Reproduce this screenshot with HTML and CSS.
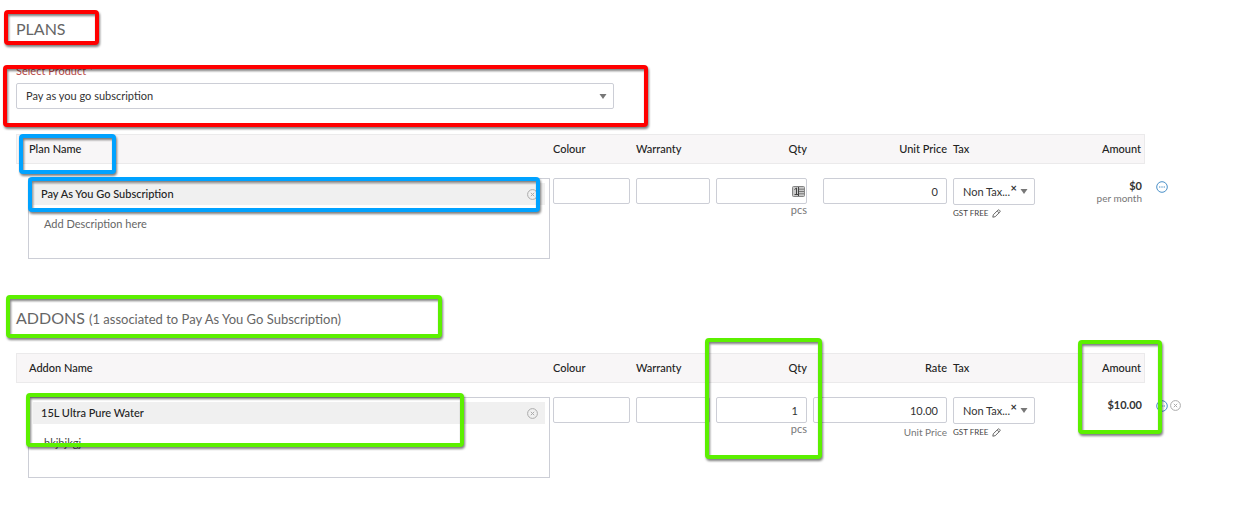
FILE: index.html
```html
<!DOCTYPE html>
<html lang="en">
<head>
    <meta charset="UTF-8">
    <title>Subscription</title>
    <link rel="stylesheet" href="styles.css">
</head>
<body>
<svg class="sprite" aria-hidden="true">
    <symbol id="close" viewBox="0 0 11 11">
        <circle cx="5.5" cy="5.5" r="4.9"/>
        <path d="M3.8 3.8l3.4 3.4M7.2 3.8L3.8 7.2"/>
    </symbol>
    <symbol id="more" viewBox="0 0 12 12">
        <circle cx="6" cy="6" r="5.3"/>
        <path d="M3 6h1.4M5.3 6h1.4M7.6 6H9"/>
    </symbol>
    <symbol id="pencil" viewBox="0 0 9 9">
        <path d="M.8 8.2l.5-2.4L6 1.1q.6-.6 1.3 0l.6.6q.6.6 0 1.3L3.2 7.7zM5.2 2l1.9 1.9"/>
    </symbol>
    <symbol id="arrow" viewBox="0 0 8 5">
        <path d="M.5 0h7L4 5z"/>
    </symbol>
</svg>
<div class="main">
    <h2>PLANS</h2>
    <label class="required" for="product">Select Product *</label>
    <div class="select product">
        <select id="product">
            <option>Pay as you go subscription</option>
        </select>
        <svg class="arrow"><use href="#arrow"/></svg>
    </div>

    <table>
        <thead>
        <tr>
            <th class="name">Plan Name</th>
            <th class="colour">Colour</th>
            <th class="warranty">Warranty</th>
            <th class="qty">Qty</th>
            <th class="price">Unit Price</th>
            <th class="tax">Tax</th>
            <th class="amount">Amount</th>
            <td class="actions"></td>
        </tr>
        </thead>
        <tbody>
        <tr>
            <td class="name">
                <div class="item">
                    <div class="bar">
                        <span>Pay As You Go Subscription</span>
                        <button class="icon grey" aria-label="Remove plan"><svg><use href="#close"/></svg></button>
                    </div>
                    <textarea aria-label="Plan description" placeholder="Add Description here"></textarea>
                </div>
            </td>
            <td><input type="text" aria-label="Colour"></td>
            <td><input type="text" aria-label="Warranty"></td>
            <td class="qty">
                <input type="text" aria-label="Qty" value="1">
                <svg class="card" viewBox="0 0 13 11">
                    <rect x=".5" y=".5" width="12" height="10" rx="1" fill="#c9c9c9" stroke="#858585"/>
                    <path d="M7 3.2h5M7 5.5h5M7 7.8h5" stroke="#777"/>
                    <path d="M2.5 3.5L4.5 2v6.5M2.5 8.5h4M6.5 1v9" stroke="#444" fill="none"/>
                </svg>
                <div class="note">pcs</div>
            </td>
            <td class="price"><input class="short" type="text" aria-label="Unit Price" value="0"></td>
            <td>
                <div class="select taxes">
                    <select aria-label="Tax"><option>Non Tax...</option></select>
                    <button class="clear" aria-label="Clear tax">×</button>
                    <svg class="arrow"><use href="#arrow"/></svg>
                </div>
                <div class="gst">GST FREE <button class="icon" aria-label="Edit tax"><svg><use href="#pencil"/></svg></button></div>
            </td>
            <td class="amount"><b>$0</b><div class="note small">per month</div></td>
            <td class="actions">
                <button class="icon blue" aria-label="More"><svg><use href="#more"/></svg></button>
            </td>
        </tr>
        </tbody>
    </table>

    <h2>ADDONS <small>(1 associated to Pay As You Go Subscription)</small></h2>
    <table>
        <thead>
        <tr>
            <th class="name">Addon Name</th>
            <th class="colour">Colour</th>
            <th class="warranty">Warranty</th>
            <th class="qty">Qty</th>
            <th class="price">Rate</th>
            <th class="tax">Tax</th>
            <th class="amount">Amount</th>
            <td class="actions"></td>
        </tr>
        </thead>
        <tbody>
        <tr>
            <td class="name">
                <div class="item">
                    <div class="bar">
                        <span>15L Ultra Pure Water</span>
                        <button class="icon grey" aria-label="Clear addon"><svg><use href="#close"/></svg></button>
                    </div>
                    <textarea aria-label="Addon description">hkjhjkgj</textarea>
                </div>
            </td>
            <td><input type="text" aria-label="Colour"></td>
            <td><input type="text" aria-label="Warranty"></td>
            <td class="qty">
                <input type="text" aria-label="Qty" value="1">
                <div class="note">pcs</div>
            </td>
            <td class="price">
                <input type="text" aria-label="Rate" value="10.00">
                <div class="note small unit">Unit Price</div>
            </td>
            <td>
                <div class="select taxes">
                    <select aria-label="Tax"><option>Non Tax...</option></select>
                    <button class="clear" aria-label="Clear tax">×</button>
                    <svg class="arrow"><use href="#arrow"/></svg>
                </div>
                <div class="gst">GST FREE <button class="icon" aria-label="Edit tax"><svg><use href="#pencil"/></svg></button></div>
            </td>
            <td class="amount"><b>$10.00</b></td>
            <td class="actions">
                <button class="icon blue" aria-label="More"><svg><use href="#more"/></svg></button>
                <button class="icon grey" aria-label="Remove addon"><svg><use href="#close"/></svg></button>
            </td>
        </tr>
        </tbody>
    </table>

    <!-- highlights over the form -->
    <div class="mark red mark-plans"></div>
    <div class="mark red mark-product"></div>
    <div class="mark blue mark-head"></div>
    <div class="mark blue mark-plan"></div>
    <div class="mark green mark-addons"></div>
    <div class="mark green mark-addon"></div>
    <div class="mark green mark-qty"></div>
    <div class="mark green mark-amount"></div>
</div>
</body>
</html>
```

FILE: styles.css
```css
*{
    box-sizing: border-box;
    margin: 0;
    padding: 0;
}
body{
    background-color: #fff;
    color: #333;
}
body, input, select, textarea, button{
    font-family: Lato, "Liberation Sans", sans-serif;
    font-size: 11px;
    line-height: 12px;
}
.sprite{
    display: none;
}
.main{
    position: relative;
    padding: 17px 16px;
}
h2{
    font-size: 16px;
    font-weight: 400;
    line-height: 24px;
    margin-bottom: 22px;
    color: #666;
}
table + h2{
    margin-top: 47px;
}
h2 small{
    font-size: 13px;
}
.required{
    display: block;
    line-height: 16px;
    margin-bottom: 4px;
    color: #b94a48;
}
input, select{
    display: block;
    width: 100%;
    height: 26px;
    border: 1px solid #ccced6;
    border-radius: 2px;
    background-color: #fff;
    color: #333;
}
input{
    padding: 0 8px;
}
select{
    appearance: none;
    padding: 0 9px;
}
.select{
    position: relative;
}
.product{
    max-width: 598px;
    margin-bottom: 25px;
}
.arrow{
    position: absolute;
    right: 7px;
    top: 11px;
    width: 8px;
    height: 5px;
    fill: #777;
    pointer-events: none;
}
.taxes select{
    height: 27px;
}
.clear{
    position: absolute;
    right: 18px;
    top: 4px;
    border: none;
    background: none;
    color: #333;
    font-weight: bold;
}

table{
    width: 100%;
    table-layout: fixed;
    border-spacing: 0;
}
th{
    height: 30px;
    padding: 0 3px;
    border: 1px solid #ebeaeb;
    border-width: 1px 0;
    background-color: #f8f6f7;
    color: #222;
    font-weight: 500;
    text-align: left;
}
td{
    padding: 14px 3px 0;
    vertical-align: top;
}
thead td{
    padding: 0;
}
th.name{
    border-left-width: 1px;
}
td.name, th.name{
    padding-left: 12px;
    padding-right: 0;
}
.colour{
    width: 83px;
}
.warranty{
    width: 80px;
}
.qty{
    width: 97px;
}
.price{
    width: 140px;
}
.tax{
    width: 88px;
}
.amount{
    width: 107px;
}
th.amount{
    border-right-width: 1px;
}
td.amount{
    padding-top: 16px;
}
.actions{
    width: 87px;
}
tbody .actions{
    padding-top: 17px;
    padding-left: 11px;
}
.qty, .price, .amount, .qty input, .price input{
    text-align: right;
}
td.qty{
    position: relative;
}
.short{
    width: 124px;
    margin-left: auto;
}
.card{
    position: absolute;
    right: 5px;
    top: 22px;
    width: 13px;
    height: 11px;
}
.note{
    color: #777;
}
.small{
    font-size: 10px;
}
.unit{
    margin-top: 3px;
}
.gst{
    display: flex;
    align-items: center;
    gap: 3px;
    margin-top: 2px;
    font-size: 8px;
    color: #444;
}

.item{
    height: 81px;
    padding: 4px;
    border: 1px solid #ccced6;
}
.bar{
    display: flex;
    align-items: center;
    justify-content: space-between;
    height: 22px;
    padding: 0 7px 0 8px;
    background-color: #f0f0f0;
    color: #222;
    font-weight: 500;
}
textarea{
    display: block;
    width: 100%;
    height: 49px;
    padding: 13px 11px 0;
    border: none;
    resize: none;
    background: none;
    color: #444;
}
textarea::placeholder{
    color: #666;
}
.icon{
    border: none;
    background: none;
    color: #666;
}
.icon svg{
    display: block;
    width: 11px;
    height: 11px;
    fill: none;
    stroke: currentColor;
}
.gst svg{
    width: 9px;
    height: 9px;
}
.grey svg{
    color: #aaa;
    stroke-width: 1px;
}
.actions .icon{
    float: left;
    margin-right: 2px;
}
.actions .blue svg{
    width: 12px;
    height: 12px;
    color: #4a90c8;
}

.mark{
    position: absolute;
    border: 4px solid;
    border-radius: 4px;
    filter: drop-shadow(1px 2px 1px rgba(0, 0, 0, 0.5));
    pointer-events: none;
}
.mark.red{
    border-color: #f00;
}
.mark.blue{
    border-color: #00a2ff;
}
.mark.green{
    border-color: #5cf000;
}
.mark-plans{
    left: 4px;
    top: 10px;
    width: 95px;
    height: 35px;
}
.mark-product{
    left: 3px;
    top: 65px;
    width: 645px;
    height: 62px;
}
.mark-head{
    left: 19px;
    top: 134px;
    width: 97px;
    height: 40px;
}
.mark-plan{
    left: 28px;
    right: 708px;
    top: 177px;
    height: 35px;
}
.mark-addons{
    left: 6px;
    top: 295px;
    width: 436px;
    height: 43px;
}
.mark-addon{
    left: 26px;
    top: 393px;
    width: 438px;
    height: 54px;
}
.mark-qty{
    right: 426px;
    top: 338px;
    width: 117px;
    height: 121px;
}
.mark-amount{
    right: 86px;
    top: 340px;
    width: 84px;
    height: 94px;
}
```
